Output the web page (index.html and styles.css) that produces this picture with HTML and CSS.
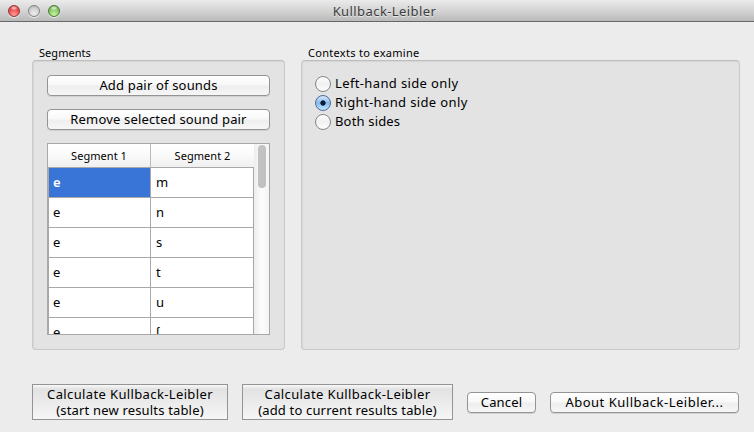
FILE: index.html
```html
<!DOCTYPE html>
<html lang="en">
<head>
<meta charset="utf-8">
<title>Kullback-Leibler</title>
<link rel="stylesheet" href="styles.css">
</head>
<body>
<div class="window">
  <header class="titlebar">
    <div class="lights"><i class="light red"></i><i class="light gray"></i><i class="light green"></i></div>
    <h1><span>Kullback-Leibler</span></h1>
  </header>
  <main class="groups">
    <section class="group segments">
      <h2>Segments</h2>
      <div class="panel">
        <button class="btn"><span>Add pair of sounds</span></button>
        <button class="btn"><span>Remove selected sound pair</span></button>
        <div class="table">
          <div class="grid">
            <div class="th">Segment 1</div><div class="th">Segment 2</div>
            <div class="td selected">e</div><div class="td">m</div>
            <div class="td">e</div><div class="td">n</div>
            <div class="td">e</div><div class="td">s</div>
            <div class="td">e</div><div class="td">t</div>
            <div class="td">e</div><div class="td">u</div>
            <div class="td">e</div><div class="td">ʃ</div>
          </div>
          <div class="scroll"><div class="thumb"></div></div>
        </div>
      </div>
    </section>
    <section class="group contexts">
      <h2>Contexts to examine</h2>
      <div class="panel">
        <div class="radio"><i class="dot"></i><span class="wide">Left-hand side only</span></div>
        <div class="radio"><i class="dot on"></i><span class="wide">Right-hand side only</span></div>
        <div class="radio"><i class="dot"></i><span>Both sides</span></div>
      </div>
    </section>
  </main>
  <footer class="actions">
    <button class="calc start"><span class="wide">Calculate Kullback-Leibler</span><span>(start new results table)</span></button>
    <button class="calc add"><span class="wide">Calculate Kullback-Leibler</span><span>(add to current results table)</span></button>
    <button class="btn cancel"><span>Cancel</span></button>
    <button class="btn about"><span>About Kullback-Leibler...</span></button>
  </footer>
</div>
</body>
</html>
```
FILE: styles.css
```css
* { box-sizing: border-box; }
body { margin: 0; }
.window {
  width: 754px; height: 432px; overflow: hidden;
  background: #ececec; color: #000;
  font: 13px/16px "Noto Sans", "Open Sans", sans-serif;
  letter-spacing: 0.17px;
}
.wide { letter-spacing: 0.37px; }
.titlebar {
  height: 22px; display: grid; grid-template-columns: 70px 1fr 55px; align-items: center;
  background: linear-gradient(#ebebeb, #d2d2d2 55%, #b9b9b9);
  border-bottom: 1px solid #686868; border-radius: 4px 0 0 0;
}
.titlebar h1 { margin: 0; font-size: 13px; font-weight: 400; line-height: 20px; letter-spacing: 0.42px; text-align: center; color: #3c3c3c; text-shadow: 0 1px 0 #e8e8e8; }
.lights { display: flex; gap: 8px; padding-left: 8px; }
.light { width: 12px; height: 12px; border-radius: 50%; border: 1px solid #777; box-shadow: 0 1px 0 #eee; }
.red { border-color: #8e3a38; background: radial-gradient(ellipse 4px 2.5px at 50% 20%, #ffd9d6, transparent), radial-gradient(circle at 50% 85%, #ff9d98, #e8484b 60%, #b93232); }
.gray { border-color: #858585; background: radial-gradient(circle at 50% 75%, #eee, #cfcfcf 60%, #aaa); }
.green { border-color: #4b7a38; background: radial-gradient(ellipse 4px 2.5px at 50% 20%, #e6f8da, transparent), radial-gradient(circle at 50% 85%, #c6f5a0, #82c564 60%, #55913f); }
.groups { display: flex; gap: 16px; padding: 24px 14px 0 32px; height: 328px; }
.group { display: flex; flex-direction: column; }
.segments { width: 253px; }
.contexts { flex: 1; }
.group h2 { margin: 0; padding-left: 7px; height: 14px; font-size: 11px; line-height: 14px; font-weight: 400; letter-spacing: 0.05px; }
.contexts h2 { letter-spacing: 0.3px; }
.panel {
  flex: 1; min-height: 0; border: 1px solid #c9c9c9; border-top-color: #bdbdbd; border-radius: 4px;
  background: #e3e3e3; box-shadow: inset 0 1px 1px #d6d6d6, inset 1px 0 1px #dadada;
}
.segments .panel { display: flex; flex-direction: column; padding: 14px; }
button { font: inherit; letter-spacing: inherit; color: #000; margin: 0; padding: 0; }
.btn {
  height: 21px; flex: none; border: 1px solid #949494; border-radius: 4px; line-height: 19px;
  background: linear-gradient(#fff, #f8f8f8 48%, #eee 52%, #f6f6f6);
  box-shadow: 0 1px 0 #d0d0d0;
}
.segments .btn { margin-bottom: 13px; }
.table { display: flex; height: 192px; border: 1px solid #a8a8a8; background: #fff; overflow: hidden; }
.grid {
  width: 206px; flex: none; display: grid; grid-template-columns: 103px 103px;
  grid-template-rows: 24px repeat(6, 30px);
}
.th { background: linear-gradient(#fff, #fafafa 50%, #efefef); border-bottom: 1px solid #a8a8a8; font-size: 11px; line-height: 23px; letter-spacing: 0.05px; text-align: center; border-right: 1px solid #bbb; }
.th + .th { border-right: 0; }
.td { border-right: 1px solid #a8a8a8; border-bottom: 1px solid #a8a8a8; line-height: 29px; padding-left: 5px; background: #fff; }
.td:nth-child(odd) { border-left: 1px solid #a8a8a8; padding-left: 4px; }
.td.selected { background: #3875d7; color: #fff; font-weight: 600; }
.scroll { flex: 1; background: linear-gradient(90deg, #ededed, #fcfcfc 50%, #f4f4f4); padding: 1px 3px 0 4px; }
.thumb { width: 8px; height: 43px; border-radius: 4px; background: #c1c1c1; }
.contexts .panel { padding: 13px 13px; }
.radio { display: flex; align-items: center; gap: 4px; height: 19px; }
.radio span { margin-top: -1px; }
.dot { width: 16px; height: 16px; border: 1px solid #858585; border-radius: 50%; background: linear-gradient(#fff, #f0f0f0 50%, #fff); }
.dot.on { border-color: #50699c; background: radial-gradient(circle, #0c1c38 0 2.3px, transparent 3px), linear-gradient(#d6e9fb, #85b9ec 50%, #bde8ff); }
.actions { display: flex; align-items: center; gap: 14px; padding: 34px 0 0 32px; }
.calc {
  height: 36px; border: 1px solid #949494; display: flex; flex-direction: column; align-items: center; justify-content: center;
  background: linear-gradient(#f9f9f9, #e2e2e2 12%, #f6f6f6);
}
.calc span { display: block; height: 16px; line-height: 16px; white-space: nowrap; }
.start { width: 196px; }
.add { width: 211px; }
.cancel { width: 69px; }
.about { width: 189px; letter-spacing: 0.5px; }
```
